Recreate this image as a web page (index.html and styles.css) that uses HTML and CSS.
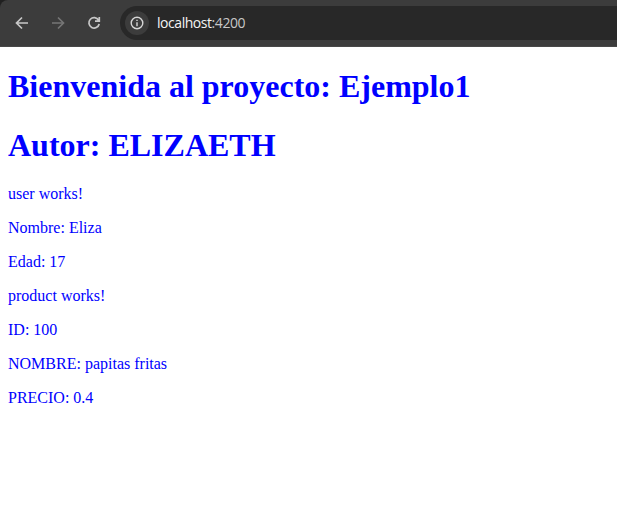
FILE: index.html
```html
<!DOCTYPE html>
<html lang="es">
<head>
<meta charset="utf-8">
<title>Ejemplo1</title>
<link rel="stylesheet" href="styles.css">
</head>
<body>
<header class="toolbar">
  <nav class="nav">
    <svg class="icon" viewBox="0 0 16 16"><path d="M14 8H3M8 2.500L2.500 8L8 13.500"/></svg>
    <svg class="icon icon-disabled" viewBox="0 0 16 16"><path d="M2 8h11M8 2.500L13.500 8L8 13.500"/></svg>
    <svg class="icon" viewBox="0 0 16 16"><path d="M12.600 5.200A5.200 5.200 0 1 0 13.200 9M13.300 2v4.200H9"/></svg>
  </nav>
  <div class="address">
    <span class="info"><svg class="info-icon" viewBox="0 0 14 14"><circle cx="7" cy="7" r="5.800"/><path d="M7 6.300v4M7 3.700v1.400"/></svg></span>
    <span class="url">localhost<span class="port">:4200</span></span>
  </div>
</header>
<main class="page">
  <h1>Bienvenida al proyecto: Ejemplo1</h1>
  <h1>Autor: ELIZAETH</h1>
  <p>user works!</p>
  <p>Nombre: Eliza</p>
  <p>Edad: 17</p>
  <p>product works!</p>
  <p>ID: 100</p>
  <p>NOMBRE: papitas fritas</p>
  <p>PRECIO: 0.4</p>
</main>
</body>
</html>
```
FILE: styles.css
```css
body {
  margin: 0;
  background: #fff;
  overflow: hidden;
}

.toolbar {
  box-sizing: border-box;
  display: flex;
  align-items: center;
  height: 47px;
  padding: 0 0 1px 14px;
  background: #3c3c3c;
  border-bottom: 1px solid #484848;
  border-top-left-radius: 8px;
  box-shadow: -8px -8px 0 #202020;
}

.nav {
  display: flex;
  gap: 20px;
  width: 106px;
}

.icon {
  width: 16px;
  height: 16px;
  fill: none;
  stroke: #c7c7c7;
  stroke-width: 1.7;
}

.icon-disabled {
  stroke: #757575;
}

.address {
  box-sizing: border-box;
  display: flex;
  flex: 1;
  align-items: center;
  gap: 8px;
  height: 34px;
  padding-left: 5px;
  background: #282828;
  border-radius: 17px 0 0 17px;
}

.info {
  display: flex;
  align-items: center;
  justify-content: center;
  width: 24px;
  height: 24px;
  border-radius: 50%;
  background: #3c3c3c;
}

.info-icon {
  width: 14px;
  height: 14px;
  fill: none;
  stroke: #d6d6d6;
  stroke-width: 1.4;
}

.url {
  font: 14px/20px "Open Sans", "Noto Sans", sans-serif;
  letter-spacing: -0.45px;
  color: #f4f4f4;
}

.port {
  color: #c7c7c7;
}

.page {
  display: flow-root;
  padding: 0 8px;
  font: 16px "Liberation Serif", serif;
  color: #00f;
}

h1 {
  margin: 21.44px 0;
  font-size: 32px;
  font-weight: bold;
}

p {
  margin: 16px 0;
}
```
